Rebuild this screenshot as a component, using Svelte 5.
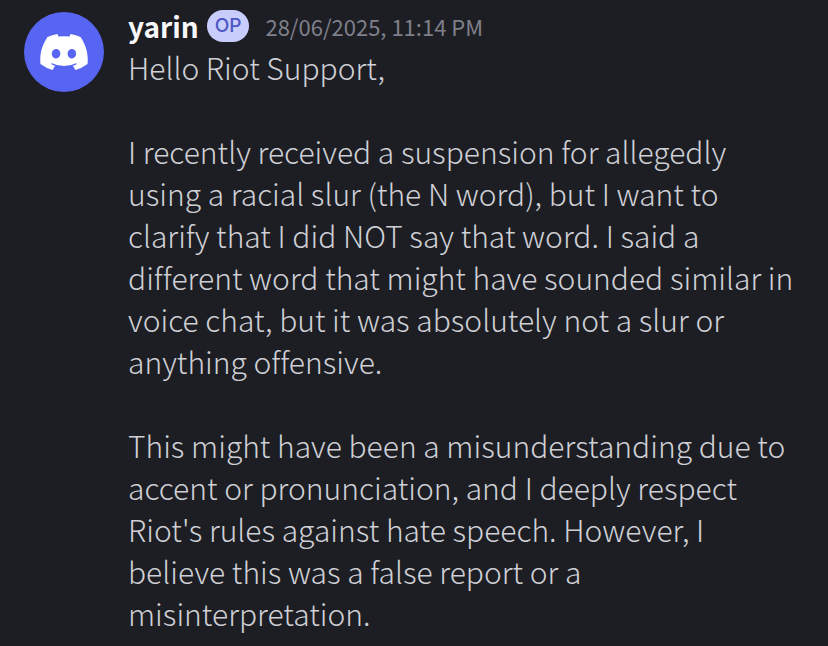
<script>
  const message = {
    author: 'yarin',
    badge: 'OP',
    iso: '2025-06-28T23:14',
    time: '28/06/2025, 11:14 PM',
    paragraphs: [
      ['Hello Riot Support,'],
      [
        'I recently received a suspension for allegedly',
        'using a racial slur (the N word), but I want to',
        'clarify that I did NOT say that word. I said a',
        'different word that might have sounded similar in',
        'voice chat, but it was absolutely not a slur or',
        'anything offensive.'
      ],
      [
        'This might have been a misunderstanding due to',
        'accent or pronunciation, and I deeply respect',
        "Riot's rules against hate speech. However, I",
        'believe this was a false report or a',
        'misinterpretation.'
      ]
    ]
  };
</script>

<article class="message">
  <div class="avatar">
    <svg viewBox="0 0 127.14 96.36" role="img" aria-label="Discord avatar">
      <path
        fill="#fff"
        d="M107.7 8.07A105.15 105.15 0 0 0 81.47 0a72.06 72.06 0 0 0-3.36 6.83 97.68 97.68 0 0 0-29.11 0A72.37 72.37 0 0 0 45.64 0a105.89 105.89 0 0 0-26.25 8.09C2.79 32.65-1.71 56.6.54 80.21a105.73 105.73 0 0 0 32.17 16.15 77.7 77.7 0 0 0 6.89-11.11 68.42 68.42 0 0 1-10.85-5.18c.91-.66 1.8-1.34 2.66-2a75.57 75.57 0 0 0 64.32 0c.87.71 1.76 1.39 2.66 2a68.68 68.68 0 0 1-10.87 5.19 77 77 0 0 0 6.89 11.1 105.25 105.25 0 0 0 32.19-16.14c2.64-27.38-4.51-51.11-18.9-72.15ZM42.45 65.69C36.18 65.69 31 60 31 53s5-12.74 11.43-12.74S54 46 53.89 53s-5.05 12.69-11.44 12.69Zm42.24 0C78.41 65.69 73.25 60 73.25 53s5-12.74 11.44-12.74S96.23 46 96.12 53s-5.04 12.69-11.43 12.69Z"
      />
    </svg>
  </div>
  <div class="content">
    <header>
      <span class="author">{message.author}</span>
      <span class="badge">{message.badge}</span>
      <time datetime={message.iso}>{message.time}</time>
    </header>
    <div class="body">
      {#each message.paragraphs as lines}
        <p>{lines.join('\n')}</p>
      {/each}
    </div>
  </div>
</article>

<style>
  :global(body) {
    margin: 0;
    background: #1d1e23;
  }

  .message {
    display: flex;
    align-items: flex-start;
    gap: 24px;
    padding: 6px 24px 8px;
    font-family: 'Noto Sans CJK SC', 'Noto Sans', sans-serif;
    font-variant-ligatures: none;
    color: #cfd0d6;
  }

  .avatar {
    flex: none;
    display: flex;
    align-items: center;
    justify-content: center;
    width: 80px;
    height: 80px;
    margin-top: 6px;
    border-radius: 50%;
    background: #5865f2;
  }

  .avatar svg {
    width: 48px;
    height: 36px;
  }

  .content {
    flex: 1;
    min-width: 0;
  }

  header {
    display: flex;
    align-items: center;
    height: 40px;
    white-space: nowrap;
  }

  .author {
    font-size: 28px;
    font-weight: 700;
    line-height: 40px;
    color: #f7f7f9;
  }

  .badge {
    margin-left: 8px;
    padding: 0 8px;
    border-radius: 16px;
    background: #c9cdfb;
    color: #4c56c4;
    font-family: 'Inter', sans-serif;
    font-size: 19px;
    font-weight: 500;
    line-height: 32px;
  }

  time {
    margin-left: 16px;
    font-size: 22px;
    line-height: 40px;
    color: #7f808b;
  }

  .body {
    display: flex;
    flex-direction: column;
    gap: 42px;
  }

  p {
    margin: 0;
    font-size: 30px;
    font-weight: 300;
    line-height: 42px;
    white-space: pre-line;
  }
</style>
